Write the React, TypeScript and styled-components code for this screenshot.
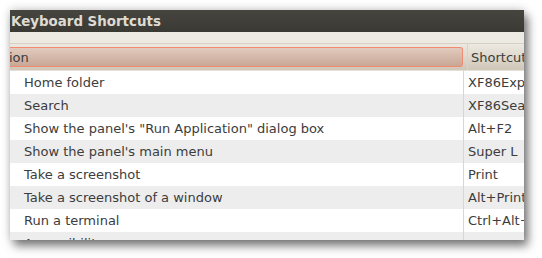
import React, { FC } from "react";
import styled, { createGlobalStyle } from "styled-components";

const GlobalStyle = createGlobalStyle`
  html, body {
    margin: 0;
    padding: 0;
    background: #ffffff;
  }
`;

interface Shortcut {
  action: string;
  keys: string;
}

const shortcuts: Shortcut[] = [
  { action: "Home folder", keys: "XF86Explorer" },
  { action: "Search", keys: "XF86Search" },
  { action: 'Show the panel\'s "Run Application" dialog box', keys: "Alt+F2" },
  { action: "Show the panel's main menu", keys: "Super L" },
  { action: "Take a screenshot", keys: "Print" },
  { action: "Take a screenshot of a window", keys: "Alt+Print" },
  { action: "Run a terminal", keys: "Ctrl+Alt+T" },
  { action: "Accessibility", keys: "" },
];

const Page = styled.div`
  width: 542px;
  height: 258px;
  padding: 10px 0 0 10px;
  box-sizing: border-box;
  overflow: hidden;
  font-family: "DejaVu Sans", sans-serif;
`;

const Window = styled.div`
  width: 514px;
  height: 230px;
  display: flex;
  flex-direction: column;
  overflow: hidden;
  background: #edeae3;
  box-shadow: 4px 6px 9px rgba(0, 0, 0, 0.5), 0 -1px 9px rgba(0, 0, 0, 0.18);
`;

const TitleBar = styled.div`
  height: 22px;
  flex: none;
  display: flex;
  align-items: center;
  padding-left: 1px;
  background: linear-gradient(#46453f, #3a3934);
  color: #dfdbd2;
  font-size: 13.4px;
  font-weight: bold;
  white-space: nowrap;
`;

const Strip = styled.div`
  height: 11px;
  flex: none;
  background: #edeae3;
  border-bottom: 1px solid #d7d1c5;
`;

const HeaderRow = styled.div`
  height: 26px;
  flex: none;
  display: flex;
  background: linear-gradient(#ede9e1, #cfc7b8);
  border-bottom: 1px solid #e4e0d8;
`;

const ActionHeader = styled.div`
  width: 453px;
  flex: none;
  display: flex;
  align-items: center;
  padding: 3px 4px 3px 0;
`;

const SelectedCell = styled.div`
  flex: 1;
  height: 100%;
  display: flex;
  align-items: center;
  box-sizing: border-box;
  border: 1px solid #f28a70;
  border-left: none;
  border-radius: 0 3px 3px 0;
  background: linear-gradient(#e1cabd, #c8a797);
  color: #3c3c3c;
  font-size: 13px;
  text-indent: -22px;
  overflow: hidden;
  white-space: nowrap;
`;

const ShortcutHeader = styled.div`
  flex: 1;
  display: flex;
  align-items: center;
  padding-left: 3px;
  border-left: 1px solid #d9d3c8;
  color: #3c3c3c;
  font-size: 13px;
  white-space: nowrap;
  overflow: hidden;
`;

const Rows = styled.div`
  flex: 1;
  background: #ffffff;
  overflow: hidden;
`;

const Row = styled.div<{ $alt: boolean }>`
  height: 23px;
  display: flex;
  background: ${(p) => (p.$alt ? "#ededed" : "#ffffff")};
  color: #3c3c3c;
  font-size: 13px;
  white-space: nowrap;
`;

const ActionCell = styled.div`
  width: 439px;
  flex: none;
  padding-left: 14px;
  display: flex;
  align-items: center;
  overflow: hidden;
`;

const KeysCell = styled.div`
  flex: 1;
  display: flex;
  align-items: center;
  padding-left: 4px;
  border-left: 1px solid #d6d6d6;
  overflow: hidden;
`;

const App: FC = () => {
  return (
    <Page>
      <GlobalStyle />
      <Window>
        <TitleBar>Keyboard Shortcuts</TitleBar>
        <Strip />
        <HeaderRow>
          <ActionHeader>
            <SelectedCell>Action</SelectedCell>
          </ActionHeader>
          <ShortcutHeader>Shortcut</ShortcutHeader>
        </HeaderRow>
        <Rows>
          {shortcuts.map((s, i) => (
            <Row key={s.action} $alt={i % 2 === 1}>
              <ActionCell>{s.action}</ActionCell>
              <KeysCell>{s.keys}</KeysCell>
            </Row>
          ))}
        </Rows>
      </Window>
    </Page>
  );
};

export default App;
